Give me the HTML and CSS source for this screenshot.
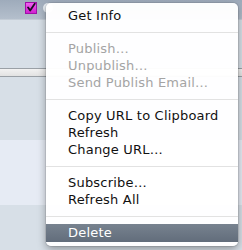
FILE: index.html
```html
<!DOCTYPE html>
<html>
<head>
<meta charset="utf-8">
<link rel="stylesheet" href="styles.css">
</head>
<body>
<div class="screen">
  <div class="header">
    <span class="check">
      <svg width="12" height="12" viewBox="0 0 12 12"><path d="M2.5 5.5 L5 9 L10.5 1" fill="none" stroke="#1a1020" stroke-width="2.2" stroke-linecap="round" stroke-linejoin="round"/></svg>
    </span>
    <span class="dot"></span>
  </div>
  <div class="gap1"></div>
  <div class="bar"></div>
  <div class="gap2"></div>
  <div class="lightrow"></div>
  <div class="rest"></div>

  <div class="menu">
    <div class="item">Get Info</div>
    <div class="sep"></div>
    <div class="item disabled">Publish…</div>
    <div class="item disabled">Unpublish…</div>
    <div class="item disabled">Send Publish Email…</div>
    <div class="sep"></div>
    <div class="item">Copy URL to Clipboard</div>
    <div class="item">Refresh</div>
    <div class="item">Change URL…</div>
    <div class="sep"></div>
    <div class="item">Subscribe…</div>
    <div class="item">Refresh All</div>
    <div class="sep"></div>
    <div class="item selected">Delete</div>
  </div>
</div>
</body>
</html>
```
FILE: styles.css
```css
html, body {
  margin: 0;
  padding: 0;
}
body {
  width: 242px;
  height: 250px;
  overflow: hidden;
  font-family: "DejaVu Sans", "Liberation Sans", sans-serif;
}
.screen {
  position: relative;
  width: 242px;
  height: 250px;
  background: #d7dfe7;
  display: flex;
  flex-direction: column;
}
.header {
  height: 20px;
  flex: none;
  background: linear-gradient(#9eabbb, #b4bfcc);
  border-bottom: 1px solid #c3ccd6;
  box-sizing: border-box;
  display: flex;
  align-items: flex-start;
  padding: 2px 0 0 25px;
  gap: 6px;
}
.check {
  width: 12px;
  height: 12px;
  box-sizing: border-box;
  background: linear-gradient(#f060f0, #d020d0);
  border: 1px solid #a010a8;
  display: flex;
  align-items: center;
  justify-content: center;
}
.check svg {
  display: block;
}
.dot {
  width: 10px;
  height: 10px;
  margin-top: 1px;
  border-radius: 50%;
  background: #e8eef4;
}
.gap1 {
  height: 48px;
  flex: none;
}
.bar {
  height: 9px;
  flex: none;
  box-sizing: border-box;
  background: linear-gradient(#f2f2f2, #e2e2e2);
  border-top: 1px solid #9aa0a6;
  border-bottom: 1px solid #9aa0a6;
}
.gap2 {
  height: 63px;
  flex: none;
}
.lightrow {
  height: 65px;
  flex: none;
  background: #e6ebf4;
}
.rest {
  flex: 1;
}
.menu {
  position: absolute;
  left: 46px;
  top: 3px;
  width: 192px;
  padding: 4px 0 4px;
  background: rgba(255, 255, 255, 0.97);
  border-radius: 5px;
  box-shadow: 0 3px 9px rgba(0, 0, 0, 0.35), 0 0 0 1px rgba(0, 0, 0, 0.08);
}
.item {
  height: 17px;
  line-height: 17px;
  padding-left: 22px;
  font-size: 13px;
  letter-spacing: 0.2px;
  color: #111;
  white-space: nowrap;
}
.item.disabled {
  color: #a4a4a4;
}
.item.selected {
  height: 18px;
  line-height: 18px;
  color: #fff;
  background: linear-gradient(#77828f, #626d7b);
}
.sep {
  height: 1px;
  margin: 8px 0 7px;
  background: #e2e2e2;
}
```
